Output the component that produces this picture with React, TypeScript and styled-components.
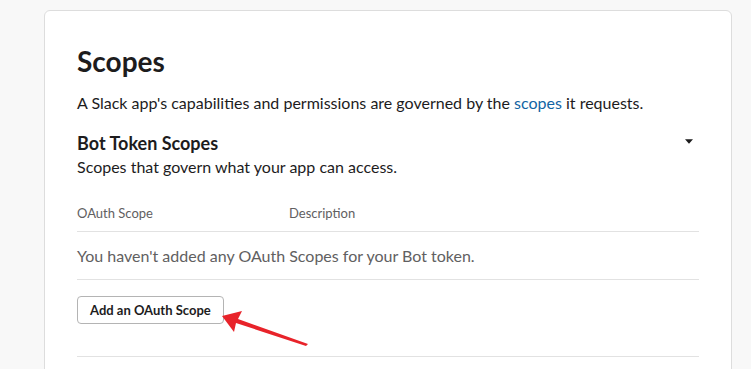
import styled, { createGlobalStyle } from 'styled-components';

const GlobalStyle = createGlobalStyle`
  body {
    margin: 0;
    background: #f8f8f8;
    font-family: Lato, 'Noto Sans', sans-serif;
    color: #1d1c1d;
  }
`;

const Page = styled.div`
  padding: 10px 0 0 44px;
  height: 369px;
  box-sizing: border-box;
  overflow: hidden;
  position: relative;
`;

const Card = styled.section`
  width: 688px;
  box-sizing: border-box;
  background: #fff;
  border: 1px solid #dddddd;
  border-radius: 6px;
  padding: 32px 32px 40px;
`;

const Title = styled.h1`
  margin: 0;
  font-size: 28px;
  line-height: 36px;
  font-weight: 700;
`;

const Lead = styled.p`
  margin: 13px 0 0;
  font-size: 16px;
  line-height: 22px;
`;

const Link = styled.a`
  color: #1264a3;
  text-decoration: none;
`;

const SectionHeader = styled.div`
  display: flex;
  justify-content: space-between;
  align-items: flex-start;
  margin-top: 18px;
`;

const SectionTitle = styled.h2`
  margin: 0;
  font-size: 18px;
  line-height: 22px;
  font-weight: 700;
`;

const SectionText = styled.p`
  margin: 2px 0 0;
  font-size: 16px;
  line-height: 22px;
`;

const Caret = styled.button`
  border: none;
  background: none;
  padding: 0 6px;
  margin-top: 4px;
  width: 20px;
  height: 10px;
  display: flex;
  align-items: center;
  justify-content: center;
`;

const HeadRow = styled.div`
  display: grid;
  grid-template-columns: 212px 1fr;
  margin-top: 26px;
  padding-bottom: 9px;
  border-bottom: 1px solid #e2e2e2;
  font-size: 13px;
  line-height: 18px;
  color: #616061;
`;

const EmptyRow = styled.div`
  padding: 13px 0 12px;
  border-bottom: 1px solid #e2e2e2;
  font-size: 16px;
  line-height: 22px;
  color: #616061;
`;

const AddButton = styled.button`
  margin-top: 16px;
  height: 28px;
  padding: 0 12px;
  background: #fff;
  border: 1px solid #b4b4b4;
  border-radius: 4px;
  font-family: Lato, 'Noto Sans', sans-serif;
  font-size: 13px;
  font-weight: 700;
  color: #1d1c1d;
`;

const Divider = styled.hr`
  margin: 32px 0 0;
  border: none;
  border-top: 1px solid #e2e2e2;
`;

const Arrow = styled.svg`
  position: absolute;
  left: 218px;
  top: 306px;
`;

export default function App() {
  return (
    <Page>
      <GlobalStyle />
      <Card>
        <Title>Scopes</Title>
        <Lead>
          A Slack app's capabilities and permissions are governed by the <Link href="#">scopes</Link> it requests.
        </Lead>
        <SectionHeader>
          <div>
            <SectionTitle>Bot Token Scopes</SectionTitle>
            <SectionText>Scopes that govern what your app can access.</SectionText>
          </div>
          <Caret aria-label="collapse">
            <svg width="9" height="5" viewBox="0 0 9 5">
              <path d="M0 0h9L4.5 5z" fill="#1d1c1d" />
            </svg>
          </Caret>
        </SectionHeader>
        <HeadRow>
          <span>OAuth Scope</span>
          <span>Description</span>
        </HeadRow>
        <EmptyRow>You haven't added any OAuth Scopes for your Bot token.</EmptyRow>
        <AddButton>Add an OAuth Scope</AddButton>
        <Divider />
      </Card>
      <Arrow width="95" height="45" viewBox="0 0 95 45">
        <path d="M4 10 L24 5 L20 13 L90 38 L88 40 L18 17 L16 26 Z" fill="#e8232a" />
      </Arrow>
    </Page>
  );
}
